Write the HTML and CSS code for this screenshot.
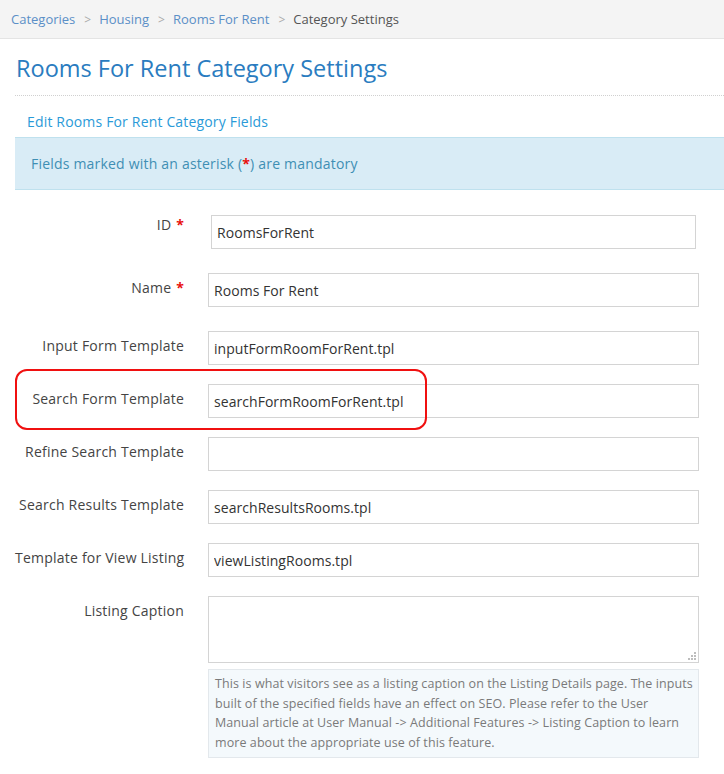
FILE: index.html
```html
<!DOCTYPE html>
<html>
<head>
<meta charset="utf-8">
<link rel="stylesheet" href="styles.css">
</head>
<body>
<div class="crumbs">
  <a class="crumb">Categories</a><span class="sep">&gt;</span>
  <a class="crumb">Housing</a><span class="sep">&gt;</span>
  <a class="crumb">Rooms For Rent</a><span class="sep">&gt;</span>
  <span class="current">Category Settings</span>
</div>
<div class="page">
  <h1 class="title">Rooms For Rent Category Settings</h1>
  <a class="edit-link">Edit Rooms For Rent Category Fields</a>
  <div class="alert">Fields marked with an asterisk (<span class="star">*</span>) are mandatory</div>
  <form class="form">
    <div class="row row-wide">
      <label class="label">ID <span class="star">*</span></label>
      <div class="field"><input class="input input-id" value="RoomsForRent"></div>
    </div>
    <div class="row row-wide">
      <label class="label">Name <span class="star">*</span></label>
      <div class="field"><input class="input" value="Rooms For Rent"></div>
    </div>
    <div class="row">
      <label class="label">Input Form Template</label>
      <div class="field"><input class="input" value="inputFormRoomForRent.tpl"></div>
    </div>
    <div class="row">
      <label class="label">Search Form Template</label>
      <div class="field"><input class="input" value="searchFormRoomForRent.tpl"></div>
      <div class="ring"></div>
    </div>
    <div class="row">
      <label class="label">Refine Search Template</label>
      <div class="field"><input class="input" value=""></div>
    </div>
    <div class="row">
      <label class="label">Search Results Template</label>
      <div class="field"><input class="input" value="searchResultsRooms.tpl"></div>
    </div>
    <div class="row">
      <label class="label">Template for View Listing</label>
      <div class="field"><input class="input" value="viewListingRooms.tpl"></div>
    </div>
    <div class="row row-last">
      <label class="label">Listing Caption</label>
      <div class="field">
        <div class="ta-wrap">
          <textarea class="textarea"></textarea>
          <svg class="grip" width="10" height="10" viewBox="0 0 10 10">
            <rect x="7" y="1" width="2" height="2" fill="#bdbdbd"/>
            <rect x="4" y="4" width="2" height="2" fill="#bdbdbd"/>
            <rect x="7" y="4" width="2" height="2" fill="#bdbdbd"/>
            <rect x="1" y="7" width="2" height="2" fill="#bdbdbd"/>
            <rect x="4" y="7" width="2" height="2" fill="#bdbdbd"/>
            <rect x="7" y="7" width="2" height="2" fill="#bdbdbd"/>
          </svg>
        </div>
        <div class="help">This is what visitors see as a listing caption on the Listing Details page. The inputs built of the specified fields have an effect on SEO. Please refer to the User Manual article at User Manual -&gt; Additional Features -&gt; Listing Caption to learn more about the appropriate use of this feature.</div>
      </div>
    </div>
  </form>
</div>
</body>
</html>
```
FILE: styles.css
```css
* { box-sizing: border-box; }
html, body { margin: 0; padding: 0; background: #fff; }
body {
  font-family: "Open Sans", "Liberation Sans", sans-serif;
  color: #444;
  width: 724px;
  overflow: hidden;
}
.crumbs {
  height: 39px;
  background: #f4f4f4;
  border-bottom: 1px solid #e4e4e4;
  padding: 0 0 0 11px;
  display: flex;
  align-items: center;
  font-size: 13px;
  white-space: nowrap;
}
.crumb { color: #5b8fc7; }
.sep { color: #aaa; margin: 0 8px 0 9px; font-size: 12px; }
.current { color: #555; }
.page { padding: 0 0 0 15px; }
.title {
  margin: 0;
  padding: 13px 0 0 1px;
  height: 57px;
  font-size: 23.5px;
  font-weight: 400;
  color: #2a7cc0;
  line-height: 33px;
  border-bottom: 1px dotted #d0d0d0;
}
.edit-link {
  display: block;
  color: #2a9ad8;
  font-size: 14px;
  letter-spacing: 0.17px;
  padding: 16px 0 0 12px;
  height: 41px;
  line-height: 20px;
}
.alert {
  background: #d9ecf6;
  border-top: 1px solid #bfe1ee;
  border-bottom: 1px solid #bfe1ee;
  height: 53px;
  padding: 16px 0 0 16px;
  line-height: 20px;
  color: #3f8fb4;
  font-size: 14px;
  letter-spacing: 0.2px;
  margin-right: -10px;
}
.star { color: #e8100e; font-weight: 700; }
.form { padding-top: 25px; }
.row {
  display: flex;
  gap: 23px;
  position: relative;
  height: 53px;
}
.row-wide { height: 58px; }
.row-last { height: auto; }
.label {
  width: 170px;
  flex: none;
  white-space: nowrap;
  text-align: right;
  font-size: 14px;
  letter-spacing: 0.22px;
  color: #444;
  padding-top: 5px;
  line-height: 20px;
  padding-right: 1px;
}
.label .star { margin-left: 1px; }
.field { width: 491px; flex: none; }
.input {
  width: 491px;
  height: 34px;
  border: 1px solid #d4d4d4;
  padding: 0 5px;
  font-family: "Open Sans", "Liberation Sans", sans-serif;
  font-size: 14px;
  letter-spacing: 0.05px;
  color: #333;
  background: #fff;
  outline: none;
  margin: 0;
}
.input-id { width: 485px; margin-left: 3px; }
.row-wide:first-child .label { padding-top: 0; }
.ta-wrap { position: relative; }
.textarea {
  display: block;
  width: 491px;
  height: 67px;
  border: 1px solid #d4d4d4;
  margin: 0;
  resize: none;
  outline: none;
  font-family: "Open Sans", "Liberation Sans", sans-serif;
}
.grip {
  position: absolute;
  right: 2px;
  bottom: 2px;
}
.help {
  margin-top: 6px;
  background: #f4f9fc;
  border: 1px solid #e3e8ec;
  padding: 4px 5px 5px 6px;
  font-size: 12.5px;
  letter-spacing: 0.08px;
  line-height: 19.5px;
  color: #7a7a7a;
}
.ring {
  position: absolute;
  left: 0;
  top: -15px;
  width: 412px;
  height: 61px;
  border: 2px solid #f01010;
  border-radius: 12px;
  pointer-events: none;
}
```
